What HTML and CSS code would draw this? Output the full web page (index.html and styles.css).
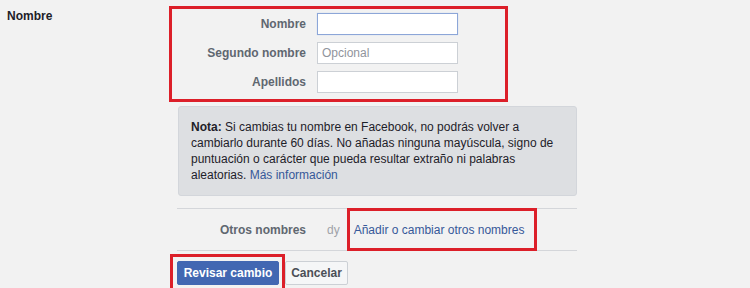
FILE: index.html
```html
<!DOCTYPE html>
<html lang="es">
<head>
  <meta charset="UTF-8" />
  <title>Nombre</title>
  <link rel="stylesheet" href="styles.css">
</head>
<body>
  <div class="ajuste">
    <div class="ajuste-titulo">Nombre</div>
    <div class="ajuste-cuerpo">
      <div class="marca nombres">
        <label class="etiqueta" for="nombre">Nombre</label>
        <input class="campo enfocado" id="nombre" type="text" />
        <label class="etiqueta" for="segundo">Segundo nombre</label>
        <input class="campo" id="segundo" type="text" placeholder="Opcional" />
        <label class="etiqueta" for="apellidos">Apellidos</label>
        <input class="campo" id="apellidos" type="text" />
      </div>

      <div class="nota">
        <b>Nota:</b> Si cambias tu nombre en Facebook, no podrás volver a cambiarlo durante 60 días. No añadas ninguna mayúscula, signo de puntuación o carácter que pueda resultar extraño ni palabras aleatorias. <a href="#">Más información</a>
      </div>

      <div class="otros">
        <div class="etiqueta otros-etiqueta">Otros nombres</div>
        <div class="otros-dy">dy</div>
        <div class="marca otros-enlace"><a href="#">Añadir o cambiar otros nombres</a></div>
      </div>

      <div class="acciones">
        <div class="marca marca-boton">
          <button class="boton boton-azul">Revisar cambio</button>
        </div>
        <button class="boton boton-gris">Cancelar</button>
      </div>
    </div>
  </div>
</body>
</html>
```

FILE: styles.css
```css
body {
  margin: 0;
  background: #f2f2f2;
  color: #1d2129;
  font-family: "Liberation Sans", Arial, sans-serif;
  font-size: 12px;
  line-height: 16px;
  overflow: hidden;
}
a {
  color: #365899;
  text-decoration: none;
}
.ajuste {
  display: flex;
  padding-top: 6px;
}
.ajuste-titulo {
  width: 177px;
  box-sizing: border-box;
  padding: 2px 0 0 7px;
  font-weight: bold;
  color: #1d2129;
}
.ajuste-cuerpo {
  width: 400px;
}
.marca {
  border: 3px solid #dc1f29;
  box-sizing: border-box;
}
.nombres {
  margin-left: -8px;
  width: 339px;
  height: 96px;
  padding-top: 4px;
  display: grid;
  grid-template-columns: 134px 141px;
  grid-auto-rows: 22px;
  column-gap: 11px;
  row-gap: 7px;
  align-items: center;
  align-content: start;
}
.etiqueta {
  text-align: right;
  font-weight: bold;
  color: #606770;
}
.campo {
  height: 22px;
  box-sizing: border-box;
  margin: 0;
  padding: 0 4px;
  border: 1px solid #ccd0d5;
  background: #fff;
  font-family: inherit;
  font-size: 12px;
  outline: none;
}
.campo::placeholder {
  color: #90949c;
}
.enfocado {
  border-color: #8ca6d8;
  box-shadow: 0 0 1px #bdcdee;
}
.nota {
  margin: 4px 0 0 1px;
  width: 399px;
  box-sizing: border-box;
  padding: 12px;
  background: #dddfe2;
  border: 1px solid #d3d6db;
  border-radius: 3px;
}
.otros {
  margin-top: 12px;
  height: 43px;
  box-sizing: border-box;
  border-top: 1px solid #d4d6da;
  border-bottom: 1px solid #d4d6da;
  display: flex;
  align-items: center;
}
.otros-etiqueta {
  width: 129px;
}
.otros-dy {
  margin-left: 21px;
  color: #a0a3a8;
}
.otros-enlace {
  margin: -1px 0 -1px 7px;
  align-self: stretch;
  width: 190px;
  padding: 0 4px;
  display: flex;
  align-items: center;
  white-space: nowrap;
}
.acciones {
  display: flex;
  align-items: flex-start;
  margin-top: 3px;
}
.marca-boton {
  margin-left: -7px;
  padding: 4px 3px 4px 4px;
}
.boton {
  height: 24px;
  box-sizing: border-box;
  margin: 0;
  padding: 0;
  border-radius: 2px;
  font-family: inherit;
  font-size: 12px;
  font-weight: bold;
  white-space: nowrap;
  cursor: pointer;
}
.boton-azul {
  width: 102px;
  background: #4267b2;
  border: 1px solid #4267b2;
  color: #fff;
}
.boton-gris {
  margin-top: 7px;
  width: 63px;
  background: #f5f6f7;
  border: 1px solid #ccd0d5;
  color: #4b4f56;
}
```
